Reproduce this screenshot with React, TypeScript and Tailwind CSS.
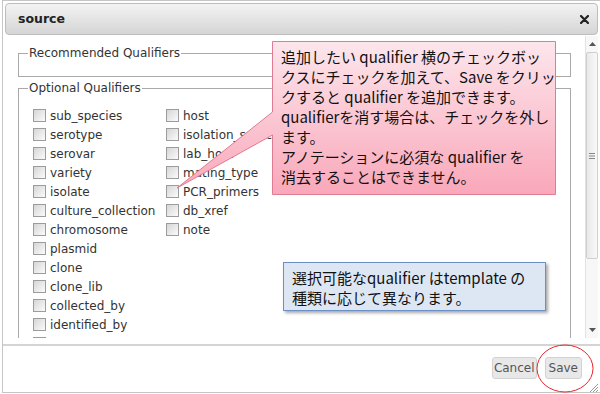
import React from 'react';

const colA = [
  'sub_species',
  'serotype',
  'serovar',
  'variety',
  'isolate',
  'culture_collection',
  'chromosome',
  'plasmid',
  'clone',
  'clone_lib',
  'collected_by',
  'identified_by',
  'cell_line',
];

const colB = ['host', 'isolation_source', 'lab_host', 'mating_type', 'PCR_primers', 'db_xref', 'note'];

const tipLines = [
  '追加したい qualifier 横のチェックボッ',
  'クスにチェックを加えて、Save をクリッ',
  'クすると qualifier を追加できます。',
  'qualifierを消す場合は、チェックを外し',
  'ます。',
  'アノテーションに必須な qualifier を',
  '消去することはできません。',
];

function Box() {
  return <span className="w-[13px] h-[13px] shrink-0 border border-[#9c9c9c] bg-gradient-to-br from-[#d6d6d6] to-[#fbfbfb]" />;
}

function Item({ label }: { label: string }) {
  return (
    <div className="h-[19px] flex items-center gap-[4px] whitespace-nowrap">
      <Box />
      <span>{label}</span>
    </div>
  );
}

export default function App() {
  return (
    <div className="w-[600px] h-[394px] bg-white relative overflow-hidden pl-[2px] font-['DejaVu_Sans',sans-serif] text-[12px] text-[#333]">
      <div className="w-[598px] h-[393px] border border-r-0 border-[#c6c6c6] flex flex-col p-[2px] pb-0">
        {/* Title bar */}
        <div className="h-[32px] shrink-0 rounded-[4px] border border-[#bdbdbd] bg-gradient-to-b from-[#f3f3f3] to-[#d5d5d5] flex items-center justify-between pl-[12px] pr-[8px]">
          <span className="font-bold text-[12.5px] text-[#222]">source</span>
          <svg width="9" height="9" viewBox="0 0 9 9">
            <path d="M1 1 L8 8 M8 1 L1 8" stroke="#222" strokeWidth="2.2" strokeLinecap="round" />
          </svg>
        </div>

        {/* Body */}
        <div className="h-[302px] mt-[1px] flex shrink-0">
          <div className="flex-1 overflow-hidden pl-[13px] pr-[14px]">
            <fieldset className="mt-[9px] h-[32px] border border-[#a9a9a9] pl-[9px]">
              <legend className="px-[1px] leading-[16px]">Recommended Qualifiers</legend>
            </fieldset>
            <fieldset className="mt-[3px] border border-[#a9a9a9] pl-[9px] pb-[10px]">
              <legend className="px-[1px] leading-[16px]">Optional Qualifiers</legend>
              <div className="grid grid-cols-[133px_1fr] pl-[5px] pt-[10px]">
                <div className="flex flex-col">
                  {colA.map((q) => (
                    <Item key={q} label={q} />
                  ))}
                </div>
                <div className="flex flex-col">
                  {colB.map((q) => (
                    <Item key={q} label={q} />
                  ))}
                </div>
              </div>
            </fieldset>
          </div>

          {/* Scrollbar */}
          <div className="w-[13px] border-l border-[#e2e2e2] bg-[#f7f7f7] flex flex-col items-center">
            <div className="h-[16px] flex items-center justify-center">
              <svg width="7" height="4" viewBox="0 0 7 4">
                <path d="M0 4 L3.5 0 L7 4 Z" fill="#555" />
              </svg>
            </div>
            <div className="w-[12px] h-[207px] rounded-[2px] border border-[#cfcfcf] bg-gradient-to-r from-[#e9e9e9] to-[#f9f9f9] flex items-center justify-center">
              <svg width="6" height="6" viewBox="0 0 6 6">
                <path d="M0 0.5 H6 M0 3 H6 M0 5.5 H6" stroke="#888" strokeWidth="1" />
              </svg>
            </div>
            <div className="flex-1" />
            <div className="h-[16px] flex items-center justify-center">
              <svg width="7" height="4" viewBox="0 0 7 4">
                <path d="M0 0 L3.5 4 L7 0 Z" fill="#555" />
              </svg>
            </div>
          </div>
        </div>

        <div className="h-[6px] shrink-0" />
        {/* Footer */}
        <div className="-mx-[2px] flex-1 border-t-2 border-[#d4d4d4] flex justify-end items-start gap-[8px] pt-[11px] pr-[18px] text-[12px] text-[#555]">
          <button className="h-[22px] px-[1px] rounded-[3px] border border-[#d2d2d2] bg-[#e8e8e8] leading-none">Cancel</button>
          <button className="h-[22px] px-[3px] rounded-[3px] border border-[#d2d2d2] bg-[#e8e8e8] leading-none">Save</button>
        </div>
      </div>

      {/* Resize grip */}
      <svg className="absolute right-[2px] bottom-[2px]" width="9" height="9" viewBox="0 0 9 9">
        <path d="M9 1 L1 9 M9 4 L4 9 M9 7 L7 9" stroke="#999" strokeWidth="1" />
      </svg>

      {/* Pink callout */}
      <svg className="absolute left-0 top-0" width="600" height="394" viewBox="0 0 600 394">
        <defs>
          <linearGradient id="pink" x1="0" y1="41" x2="0" y2="194" gradientUnits="userSpaceOnUse">
            <stop offset="0" stopColor="#fde6ec" />
            <stop offset="1" stopColor="#f9a8ba" />
          </linearGradient>
        </defs>
        <path
          d="M272.5 41.5 H555.5 V194.5 H272.5 V135 L177 188 L272.5 112 Z"
          fill="url(#pink)"
          stroke="#e07b94"
          strokeWidth="1"
        />
        <ellipse cx="565" cy="368.5" rx="28" ry="23.5" fill="none" stroke="#e8262b" strokeWidth="1" />
      </svg>
      <div className="absolute left-[281px] top-[47px] font-['Noto_Sans_CJK_JP',sans-serif] text-[15px] leading-[20px] text-[#111]">
        {tipLines.map((l, i) => (
          <div key={i} className="whitespace-nowrap">
            {l}
          </div>
        ))}
      </div>

      {/* Blue note */}
      <div className="absolute left-[283px] top-[262px] w-[263px] h-[49px] border border-[#6d8fc8] bg-[#dde7f4] shadow-[2px_2px_3px_rgba(0,0,0,0.35)] pl-[8px] pt-[5px] font-['Noto_Sans_CJK_JP',sans-serif] text-[15px] leading-[20px] text-[#111]">
        <div className="whitespace-nowrap">選択可能なqualifier はtemplate の</div>
        <div className="whitespace-nowrap">種類に応じて異なります。</div>
      </div>
    </div>
  );
}
